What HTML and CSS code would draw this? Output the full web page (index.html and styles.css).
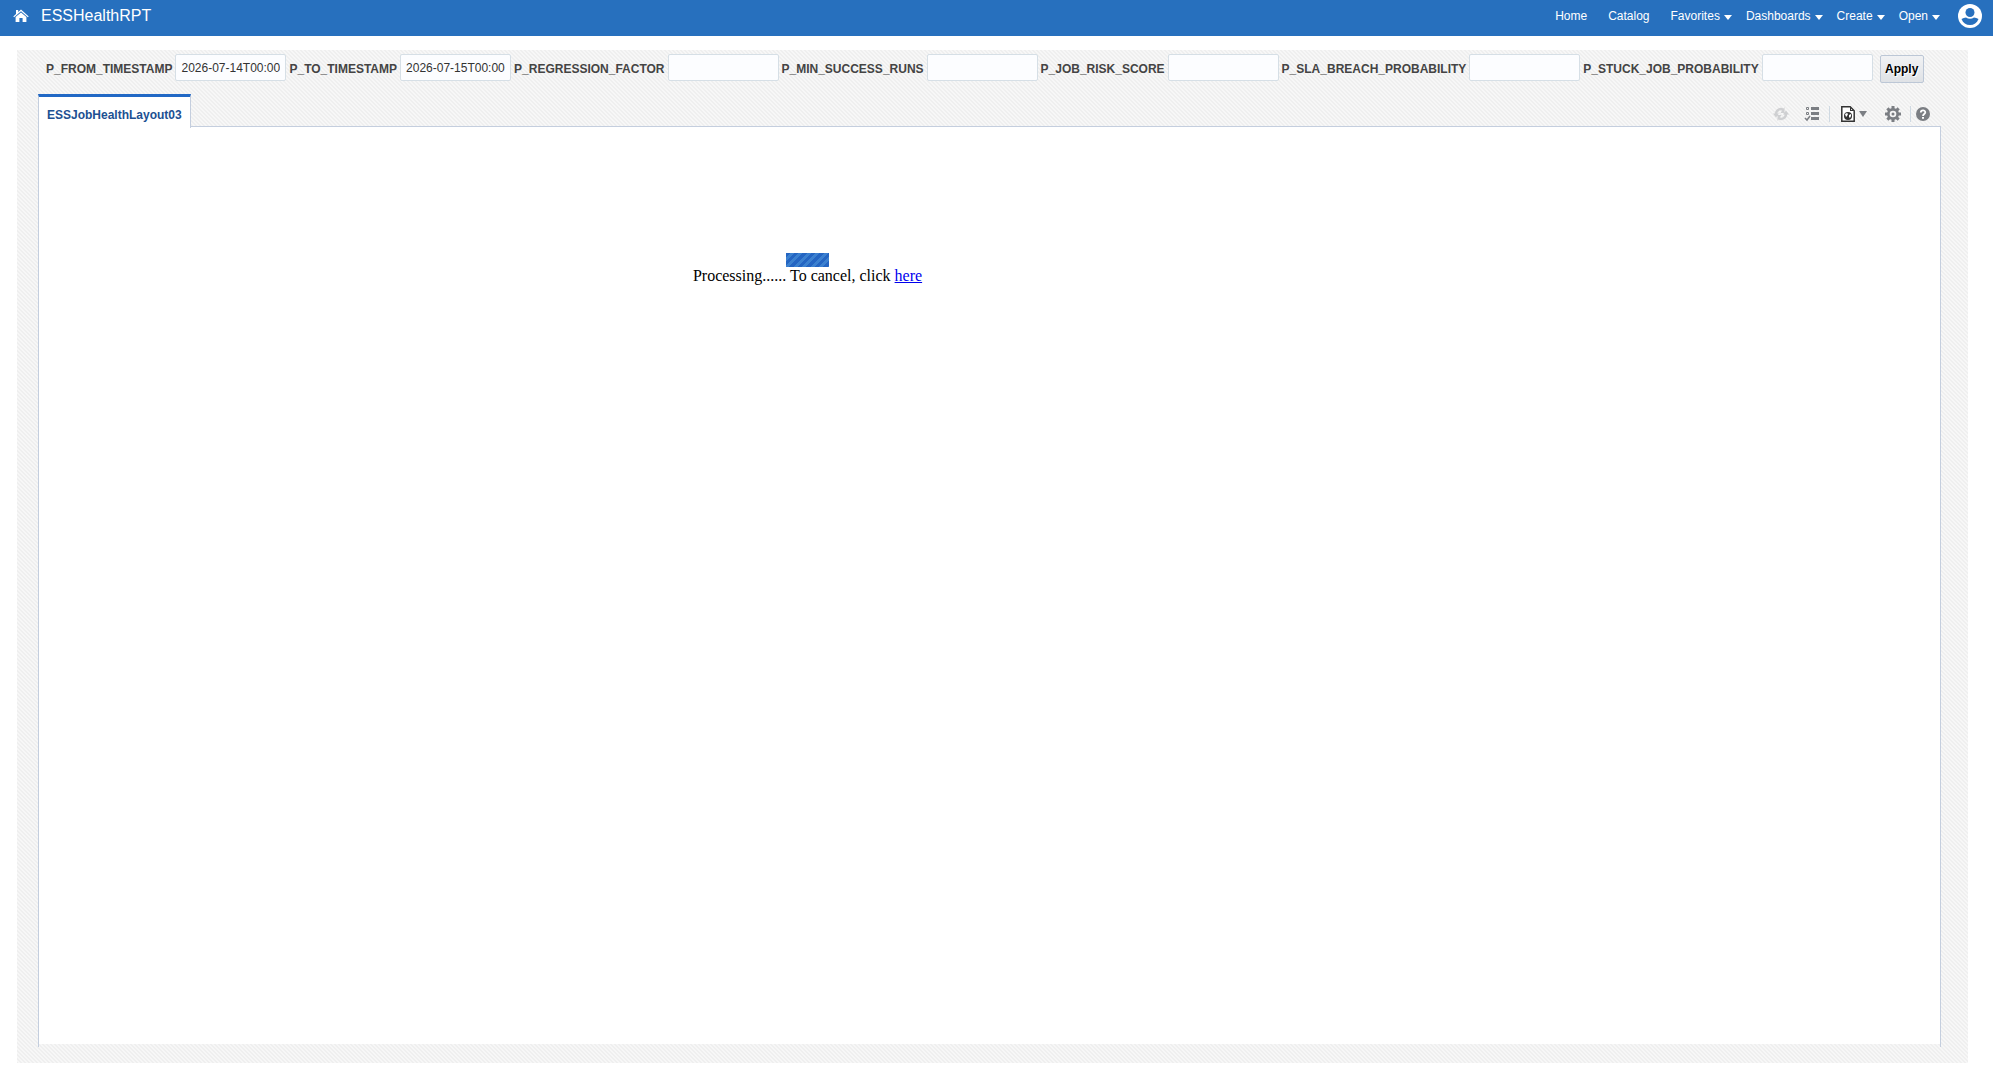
FILE: index.html
```html
<!DOCTYPE html>
<html lang="en">
<head>
<meta charset="utf-8">
<title>ESSHealthRPT</title>
<link rel="stylesheet" href="styles.css">
</head>
<body>
<header class="topbar">
  <a class="home" href="#" aria-label="Home"><svg width="16" height="14" viewBox="0 0 16 14"><path fill="#fff" d="M8 .5 15.7 7.4 14.9 8.3 8 2.3 1.1 8.3.3 7.4 3 5V1h2.2v2zM8 3.4l5.4 4.7V13H9.6V9H6.4v4H2.6V8.1z"/></svg></a>
  <h1 class="title">ESSHealthRPT</h1>
  <nav class="nav">
    <a class="plain" href="#">Home</a>
    <a class="plain" href="#">Catalog</a>
    <a href="#">Favorites<span class="caret"></span></a>
    <a href="#">Dashboards<span class="caret"></span></a>
    <a href="#">Create<span class="caret"></span></a>
    <a href="#">Open<span class="caret"></span></a>
    <a class="user" href="#" aria-label="Account"><svg width="24" height="24" viewBox="0 0 24 24"><circle cx="12" cy="12" r="12" fill="#fff"/><circle cx="12" cy="8.500" r="4.500" fill="#2770be"/><path fill="#2770be" d="M3.500 15C5 14 6.500 13.500 8 13.500c2.500 1.800 5.500 1.800 8 0 1.500 0 3 .5 4.500 1.500C18.900 19 16 21 12 21s-6.900-2-8.500-6z"/></svg></a>
  </nav>
</header>
<main class="panel">
  <form class="params">
    <label for="p1">P_FROM_TIMESTAMP</label><input id="p1" type="text" value="2026-07-14T00:00:00">
    <label for="p2">P_TO_TIMESTAMP</label><input id="p2" type="text" value="2026-07-15T00:00:00">
    <label for="p3">P_REGRESSION_FACTOR</label><input id="p3" type="text">
    <label for="p4">P_MIN_SUCCESS_RUNS</label><input id="p4" type="text">
    <label for="p5">P_JOB_RISK_SCORE</label><input id="p5" type="text">
    <label for="p6">P_SLA_BREACH_PROBABILITY</label><input id="p6" type="text">
    <label for="p7">P_STUCK_JOB_PROBABILITY</label><input id="p7" type="text">
    <button class="apply" type="button">Apply</button>
  </form>
  <div class="tabs">
    <a class="tab" href="#">ESSJobHealthLayout03</a>
    <div class="tools">
      <button type="button" class="refresh" aria-label="Refresh"><svg width="16" height="16" viewBox="0 0 16 16"><g fill="none" stroke="#cfd0d2" stroke-width="2.500"><path d="M3 8.500C3 4 7 1.800 10.500 4"/><path d="M13 7.500C13 12 9 14.200 5.500 12"/></g><path fill="#cfd0d2" d="M0 7.500h6L3 11.500zM10 8.500h6l-3-4zM11.500 1v6H7.500zM4.500 15V9h4z"/></svg></button>
      <button type="button" aria-label="Parameters"><svg width="16" height="16" viewBox="0 0 16 16"><g fill="none" stroke="#7b7e83"><path d="M2.500 1.500h2v2h-2zM2.500 6.500h2v2h-2z"/><path stroke-width="1.500" d="m1 12 2 2 3-4"/></g><path fill="#7b7e83" d="M7 1h8v3H7zM7 6h8v3H7zM7 11h8v3H7z"/></svg></button>
      <span class="sep"></span>
      <button type="button" class="view" aria-label="View report"><svg width="14" height="16" viewBox="0 0 14 16"><path fill="#fff" stroke="#333" stroke-width="1.500" d="M.8.8h8.400l4 4v10.400H.8z"/><path fill="#333" d="M9 1v4h4L12 4h-2V2z"/><circle cx="7" cy="10" r="4" fill="#333"/><path fill="#fff" d="m4 8 2-1 1 1-1 2-1 1zM8 9l2-1v2l-1 2-1-1z"/></svg><span class="drop"></span></button>
      <button type="button" class="gear" aria-label="Actions"><svg width="16" height="16" viewBox="0 0 16 16"><g fill="#7b7e83"><path d="M6.500 0h3v16h-3zM0 6.500h16v3H0z"/><path transform="rotate(45 8 8)" d="M6.500 0h3v16h-3zM0 6.500h16v3H0z"/><circle cx="8" cy="8" r="6"/></g><circle cx="8" cy="8" r="3.300" fill="#f5f5f5"/><circle cx="8" cy="8" r="1.500" fill="#7b7e83"/></svg></button>
      <span class="sep"></span>
      <button type="button" class="help" aria-label="Help"><svg width="14" height="14" viewBox="0 0 14 14"><circle cx="7" cy="7" r="7" fill="#7b7e83"/><path fill="none" stroke="#fff" stroke-width="1.800" d="M4.800 5.500C4.800 2.700 9.300 2.700 9.300 5.300 9.300 7 7 7 7 9"/><path fill="#fff" d="M6 10h2v1.800H6z"/></svg></button>
    </div>
  </div>
  <section class="report">
    <div class="status">
      <div class="progress"></div>
      <p>Processing...... To cancel, click <a href="#">here</a></p>
    </div>
  </section>
</main>
</body>
</html>
```
FILE: styles.css
```css
* { box-sizing: border-box; }
body {
  margin: 0;
  min-height: 100vh;
  display: flex;
  flex-direction: column;
  background: #fff;
  font: 12px/16px "Liberation Sans", Arial, sans-serif;
}
a { text-decoration: none; }
svg { display: block; }
.topbar {
  display: flex;
  align-items: center;
  height: 36px;
  padding: 0 11px 4px 13px;
  background: #2770be;
  color: #fff;
}
.title {
  margin: 0 0 0 12px;
  font-size: 16px;
  font-weight: 400;
  line-height: 20px;
}
.nav {
  display: flex;
  align-items: center;
  margin-left: auto;
}
.nav a {
  display: flex;
  align-items: center;
  gap: 4px;
  margin-right: 14px;
  color: #fff;
}
.nav .plain { margin-right: 21px; }
.nav .user { margin: 0 0 0 4px; }
.caret, .drop {
  border: 4px solid transparent;
  border-top: 5px solid #fff;
  border-bottom: 0;
}
.caret { margin-top: 3px; }
.panel {
  flex: 1;
  display: flex;
  flex-direction: column;
  margin: 14px 25px 19px 17px;
  padding: 4px 27px 16px 21px;
  background: linear-gradient(45deg, #f7f7f7 25%, #efefef 25% 50%, #f7f7f7 50% 75%, #efefef 75%) 0 0 / 4px 4px;
}
.params {
  display: flex;
  align-items: center;
  gap: 3px;
  padding-left: 8px;
  height: 29px;
  color: #444;
}
.params label {
  font-weight: 700;
  white-space: nowrap;
}
.params input {
  width: 111px;
  height: 27px;
  margin-bottom: 2px;
  padding: 0 5px;
  border: 1px solid #d6dfe6;
  border-radius: 2px;
  background: #fcfdff;
  color: #333;
  font: inherit;
}
.apply {
  width: 44px;
  height: 28px;
  margin-left: 4px;
  padding: 0;
  border: 1px solid #bcc7d6;
  border-radius: 2px;
  background: linear-gradient(#f1f2f4, #dfe2e6);
  color: #000;
  font: inherit;
  font-weight: 700;
  text-shadow: 1px 1px 0 #fff;
}
.tabs {
  display: flex;
  justify-content: space-between;
  margin-top: 11px;
  height: 32px;
}
.tab {
  height: 34px;
  z-index: 1;
  padding: 9px 8px 0;
  border: 1px solid #c4cede;
  border-top: 3px solid #2168c5;
  border-bottom: 0;
  background: #fff;
  color: #205092;
  font-weight: 700;
  line-height: 18px;
}
.tools {
  display: flex;
  align-items: center;
  padding: 7px 11px 0 0;
}
.tools button {
  display: flex;
  align-items: center;
  margin: 0;
  padding: 0;
  border: 0;
  background: none;
}
.tools .refresh { margin-right: 15px; }
.sep {
  width: 1px;
  height: 16px;
  margin: 0 11px 0 9px;
  background: #cfd9e2;
}
.tools .view { gap: 4px; margin-right: 18px; }
.drop { border-top: 6px solid #7b7e83; }
.gear + .sep { margin-right: 5px; }
.report {
  flex: 1;
  padding-bottom: 3px;
  border: 1px solid #c4cede;
  border-bottom: 0;
  background: #fff content-box;
}
.status {
  width: fit-content;
  margin: 126px 0 0 34.4%;
  font: 16px/18px "Liberation Serif", "Times New Roman", serif;
  color: #000;
}
.status p { margin: 0; }
.status a { color: #00e; text-decoration: underline; }
.progress {
  width: 43px;
  height: 14px;
  margin: 0 auto;
  background: repeating-linear-gradient(135deg, #2465c2 0 3px, #3b80cf 3px 6px);
}
```
